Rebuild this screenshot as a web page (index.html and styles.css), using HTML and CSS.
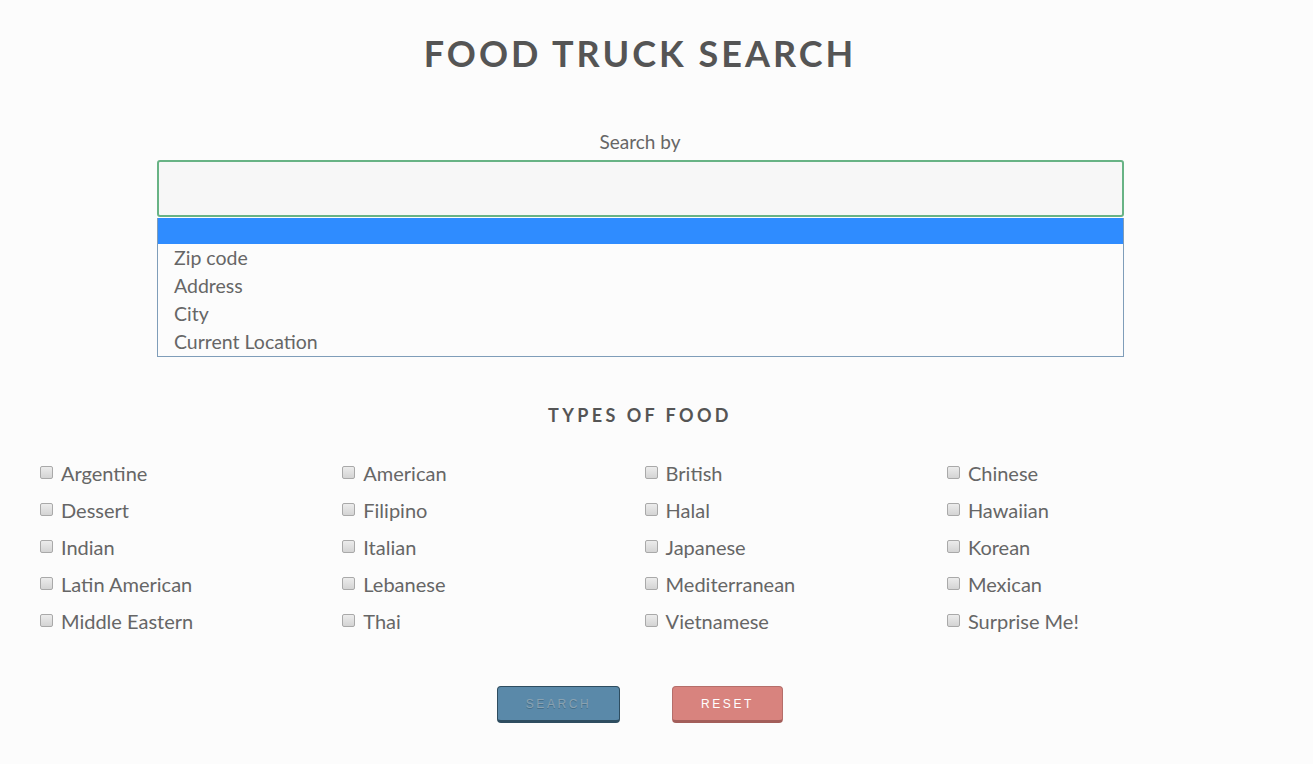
FILE: index.html
```html
<!DOCTYPE html>
<html lang="en">
<head>
<meta charset="utf-8">
<title>Food Truck Search</title>
<link rel="stylesheet" href="styles.css">
</head>
<body>
<div class="page">
  <h1 class="title">Food Truck Search</h1>
  <form class="search-form">
    <label class="search-label">Search by</label>
    <div class="select-wrap">
      <div class="select-box"></div>
      <ul class="options">
        <li class="option option-active"></li>
        <li class="option">Zip code</li>
        <li class="option">Address</li>
        <li class="option">City</li>
        <li class="option">Current Location</li>
      </ul>
    </div>
    <h2 class="subtitle">Types of Food</h2>
    <div class="food-grid">
      <label class="food"><input type="checkbox"><span>Argentine</span></label>
      <label class="food"><input type="checkbox"><span>American</span></label>
      <label class="food"><input type="checkbox"><span>British</span></label>
      <label class="food"><input type="checkbox"><span>Chinese</span></label>
      <label class="food"><input type="checkbox"><span>Dessert</span></label>
      <label class="food"><input type="checkbox"><span>Filipino</span></label>
      <label class="food"><input type="checkbox"><span>Halal</span></label>
      <label class="food"><input type="checkbox"><span>Hawaiian</span></label>
      <label class="food"><input type="checkbox"><span>Indian</span></label>
      <label class="food"><input type="checkbox"><span>Italian</span></label>
      <label class="food"><input type="checkbox"><span>Japanese</span></label>
      <label class="food"><input type="checkbox"><span>Korean</span></label>
      <label class="food"><input type="checkbox"><span>Latin American</span></label>
      <label class="food"><input type="checkbox"><span>Lebanese</span></label>
      <label class="food"><input type="checkbox"><span>Mediterranean</span></label>
      <label class="food"><input type="checkbox"><span>Mexican</span></label>
      <label class="food"><input type="checkbox"><span>Middle Eastern</span></label>
      <label class="food"><input type="checkbox"><span>Thai</span></label>
      <label class="food"><input type="checkbox"><span>Vietnamese</span></label>
      <label class="food"><input type="checkbox"><span>Surprise Me!</span></label>
    </div>
    <div class="buttons">
      <button type="button" class="btn btn-search">Search</button>
      <button type="reset" class="btn btn-reset">Reset</button>
    </div>
  </form>
</div>
</body>
</html>
```
FILE: styles.css
```css
html, body {
  margin: 0;
  padding: 0;
  background: #fcfcfc;
}
body {
  font-family: Lato, "Open Sans", "Liberation Sans", sans-serif;
  color: #666;
}
.page {
  width: 1280px;
  height: 764px;
  overflow: hidden;
}
.title {
  margin: 0;
  padding-top: 29px;
  font-size: 36px;
  line-height: 48px;
  font-weight: 700;
  letter-spacing: 3px;
  text-transform: uppercase;
  text-align: center;
  color: #555;
}
.search-form {
  display: flex;
  flex-direction: column;
  align-items: center;
}
.search-label {
  margin-top: 52px;
  font-size: 19px;
  line-height: 26px;
  color: #666;
}
.select-wrap {
  margin-top: 5px;
  width: 967px;
  margin-left: 1px;
}
.select-box {
  height: 53px;
  border: 2px solid #68b385;
  border-radius: 3px;
  background: #f7f7f7;
}
.options {
  list-style: none;
  margin: 1px 0 0 0;
  padding: 0;
  border: 1px solid #7f9db9;
  border-top: none;
  background: #fcfcfc;
}
.option {
  height: 28px;
  line-height: 28px;
  padding-left: 16px;
  font-size: 19.5px;
  color: #666;
}
.option-active {
  height: 26px;
  background: #2f8cff;
}
.subtitle {
  margin: 44px 0 0 0;
  font-size: 18px;
  line-height: 28px;
  font-weight: 700;
  letter-spacing: 3.4px;
  text-transform: uppercase;
  color: #555;
}
.food-grid {
  align-self: flex-start;
  margin-top: 25px;
  padding-left: 40px;
  display: grid;
  grid-template-columns: repeat(4, 302.3px);
  grid-auto-rows: 37px;
}
.food {
  display: flex;
  align-items: center;
  gap: 8px;
  font-size: 20px;
  color: #666;
}
.food input {
  appearance: none;
  -webkit-appearance: none;
  margin: 0;
  width: 13px;
  height: 13px;
  border: 1px solid #a9a9a9;
  border-radius: 2px;
  background: linear-gradient(#ececec, #d4d4d4);
  box-sizing: border-box;
  flex: none;
}
.buttons {
  margin-top: 47px;
  display: flex;
  gap: 52px;
}
.btn {
  height: 37px;
  border-radius: 4px;
  font-family: "Liberation Sans", Arial, sans-serif;
  font-size: 12px;
  letter-spacing: 2.6px;
  text-transform: uppercase;
  padding: 0;
  cursor: pointer;
}
.btn-search {
  width: 123px;
  background: #5a89a9;
  border: 1px solid #2e4d60;
  border-bottom-width: 3px;
  color: #8aa2b1;
  text-shadow: 0 1px 0 #46708b;
}
.btn-reset {
  width: 111px;
  background: #d8837e;
  border: 1px solid #b56e6a;
  border-bottom: 3px solid #a35e5a;
  color: #fff;
}
```
